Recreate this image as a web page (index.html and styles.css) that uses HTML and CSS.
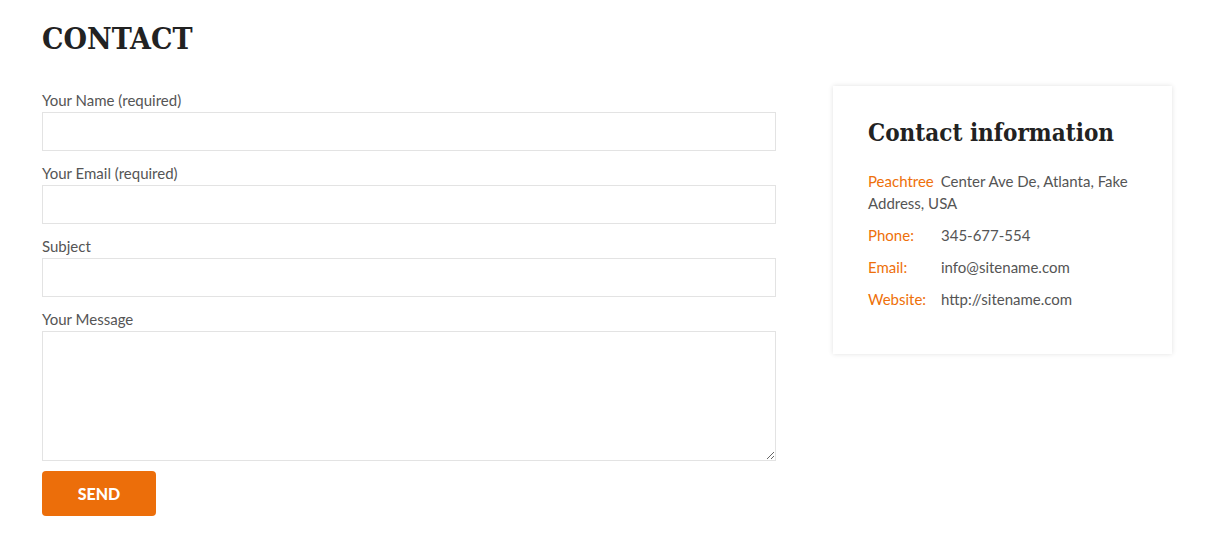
FILE: index.html
```html
<!DOCTYPE html>
<html lang="en">
<head>
    <meta charset="UTF-8">
    <meta name="viewport" content="width=device-width, initial-scale=1.0">
    <title>Contact</title>
    <link rel="stylesheet" href="styles.css">
</head>
<body>
    <div class="container">
        <h1 class="page-title">CONTACT</h1>
        <div class="contact-row">
            <form class="contact-form">
                <label for="name">Your Name (required)</label>
                <input type="text" id="name" name="name">
                <label for="email">Your Email (required)</label>
                <input type="email" id="email" name="email">
                <label for="subject">Subject</label>
                <input type="text" id="subject" name="subject">
                <label for="message">Your Message</label>
                <textarea id="message" name="message"></textarea>
                <button type="submit">SEND</button>
            </form>
            <div class="info-card">
                <h2>Contact information</h2>
                <p><span class="info-label info-label-inline">Peachtree</span> Center Ave De, Atlanta, Fake Address, USA</p>
                <p><span class="info-label">Phone:</span>345-677-554</p>
                <p><span class="info-label">Email:</span>info@sitename.com</p>
                <p><span class="info-label">Website:</span>http://sitename.com</p>
            </div>
        </div>
    </div>
</body>
</html>
```

FILE: styles.css
```css
body {
    font-family: Lato, "Open Sans", sans-serif;
    margin: 0;
    padding: 0;
    background-color: #fff;
    color: #555;
}
.container {
    width: 1130px;
    margin: 0 0 0 42px;
    padding-top: 20px;
}
.page-title {
    font-family: "DejaVu Serif", serif;
    font-stretch: condensed;
    font-size: 30px;
    font-weight: bold;
    color: #222;
    margin: 0 0 28px 0;
    line-height: 38px;
}
.contact-row {
    display: flex;
    justify-content: space-between;
    align-items: flex-start;
}
.contact-form {
    width: 734px;
    padding-top: 4px;
    display: flex;
    flex-direction: column;
}
label {
    font-size: 15px;
    line-height: 20px;
    margin-bottom: 2px;
}
input, textarea {
    height: 39px;
    border: 1px solid #e3e3e3;
    box-sizing: border-box;
    margin: 0 0 12px 0;
    font-size: 15px;
    padding: 6px 10px;
}
textarea {
    height: 130px;
    margin-bottom: 10px;
    resize: vertical;
}
button {
    width: 114px;
    height: 45px;
    border: none;
    border-radius: 4px;
    background-color: #ec6e0a;
    color: #fff;
    font-family: Lato, sans-serif;
    font-weight: 900;
    font-size: 16px;
    cursor: pointer;
}
.info-card {
    width: 339px;
    box-sizing: border-box;
    padding: 30px 35px 34px 35px;
    box-shadow: 0 0 5px rgba(0, 0, 0, 0.12);
    background-color: #fff;
}
.info-card h2 {
    font-family: "DejaVu Serif", serif;
    font-stretch: condensed;
    font-size: 24px;
    font-weight: bold;
    color: #222;
    margin: 0 0 20px 0;
    line-height: 34px;
    white-space: nowrap;
}
.info-card p {
    font-size: 15px;
    line-height: 22px;
    margin: 0 0 10px 0;
}
.info-label {
    display: inline-block;
    min-width: 65px;
    margin-right: 8px;
    color: #ee700a;
}
.info-label-inline {
    display: inline;
    margin-right: 0;
    padding-right: 3px;
}
```
